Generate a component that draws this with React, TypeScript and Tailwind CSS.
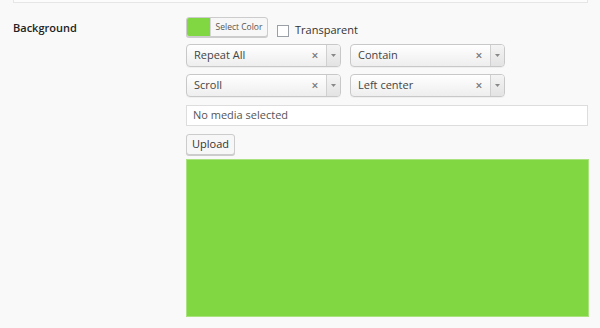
import React from "react";

const font = { fontFamily: '"Open Sans", "Noto Sans", sans-serif' };

function Select({ label }: { label: string }) {
  return (
    <div className="flex h-[23px] w-[155px] items-stretch rounded-[4px] border border-[#c8c8c8] bg-gradient-to-b from-white to-[#eeeeee] shadow-[0_1px_0_rgba(0,0,0,0.04)]">
      <div className="flex flex-1 items-center pl-[7px] text-[11px] text-[#444]">{label}</div>
      <div className="flex w-[14px] items-center justify-center text-[12px] font-semibold leading-none text-[#777]">×</div>
      <div className="ml-[4px] flex w-[14px] items-center justify-center rounded-r-[3px] border-l border-[#d0d0d0] bg-gradient-to-b from-[#f4f4f4] to-[#e3e3e3]">
        <svg width="5" height="3" viewBox="0 0 5 3">
          <path d="M0 0h5L2.5 3z" fill="#888" />
        </svg>
      </div>
    </div>
  );
}

export default function App() {
  return (
    <div className="relative h-[328px] w-[600px] overflow-hidden bg-[#f9f9f9]" style={font}>
      <div className="mx-[12px] ml-[13px] h-[3px] border-x border-b border-[#e6e6e6] bg-[#fcfcfc]" />
      <div className="flex pt-[14px]">
        <div className="w-[186px] pl-[13px] pt-[3px] text-[11px] font-semibold leading-[16px] text-[#222]">
          Background
        </div>
        <div className="flex w-[402px] flex-col">
          <div className="flex items-start">
            <div className="flex h-[20px] w-[82px] overflow-hidden rounded-[3px] border border-[#cccccc] bg-[#f7f7f7] shadow-[0_1px_0_#ccc]">
              <div className="w-[23px] bg-[#81d742]" />
              <div className="flex flex-1 items-center justify-center border-l border-[#d5d5d5] text-[8.5px] text-[#555]">
                Select Color
              </div>
            </div>
            <div className="ml-[9px] mt-[8px] h-[12px] w-[12px] border border-[#9aa0a6] bg-white" />
            <div className="ml-[6px] mt-[5px] text-[11px] leading-[15px] text-[#333]">Transparent</div>
          </div>
          <div className="mt-[7px] flex gap-[9px]">
            <Select label="Repeat All" />
            <Select label="Contain" />
          </div>
          <div className="mt-[7px] flex gap-[9px]">
            <Select label="Scroll" />
            <Select label="Left center" />
          </div>
          <div className="mt-[8px] flex h-[21px] w-[402px] items-center border border-[#dddddd] bg-white pl-[6px] text-[11px] text-[#555]">
            No media selected
          </div>
          <div className="mt-[8px] flex h-[21px] w-[49px] items-center justify-center rounded-[3px] border border-[#cccccc] bg-[#f7f7f7] text-[11px] text-[#333] shadow-[0_1px_0_#ccc]">
            Upload
          </div>
          <div className="mt-[4px] h-[158px] w-[403px] border border-[#a9e27e] bg-[#81d742]" />
        </div>
      </div>
    </div>
  );
}
